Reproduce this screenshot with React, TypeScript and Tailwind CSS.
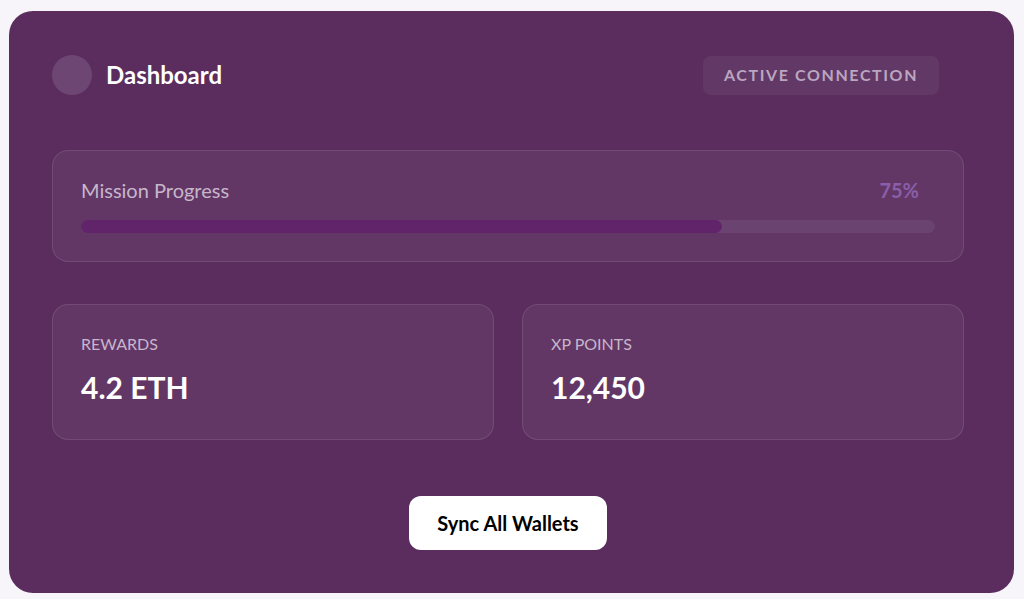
export default function App() {
  return (
    <div className="min-h-screen bg-[#f7f5fa] pt-[11px] pr-[10px] pb-[6px] pl-[9px]" style={{ fontFamily: 'Lato, "Open Sans", sans-serif' }}>
      <div className="rounded-[24px] bg-[#5a2d5e] pt-[44px] pr-[50px] pb-[43px] pl-[43px]">
        {/* Header */}
        <div className="flex h-10 items-center justify-between">
          <div className="flex items-center gap-[14px]">
            <div className="h-10 w-10 rounded-full bg-[#6e4673]" />
            <h1 className="text-[24px] font-bold text-white">Dashboard</h1>
          </div>
          <div className="mr-[25px] flex h-[39px] w-[236px] items-center justify-center rounded-lg bg-white/5 text-[16px] font-bold tracking-[0.1em] text-[#bba6c0]">
            ACTIVE CONNECTION
          </div>
        </div>

        {/* Progress */}
        <div className="mt-[55px] h-[112px] rounded-2xl border border-white/10 bg-white/5 px-[28px] pt-[24px]">
          <div className="flex items-center justify-between pr-[16px]">
            <span className="text-[20px] text-[#c7b6cb]">Mission Progress</span>
            <span className="text-[20px] font-bold text-[#8a5ea8]">75%</span>
          </div>
          <div className="mt-[15px] h-[13px] rounded-full bg-[#6b4370]">
            <div className="h-full rounded-full bg-[#61246b]" style={{ width: '75%' }} />
          </div>
        </div>

        {/* Stats */}
        <div className="mt-[42px] grid grid-cols-2 gap-[28px]">
          {[
            { label: 'REWARDS', value: '4.2 ETH' },
            { label: 'XP POINTS', value: '12,450' },
          ].map((s) => (
            <div key={s.label} className="h-[136px] rounded-2xl border border-white/10 bg-white/5 px-[28px] pt-[27px]">
              <div className="text-[16px] text-[#c7b6cb]">{s.label}</div>
              <div className="mt-[16px] text-[30px] font-bold leading-none text-white">{s.value}</div>
            </div>
          ))}
        </div>

        {/* Action */}
        <div className="mt-[56px] flex justify-center">
          <button className="h-[54px] w-[198px] rounded-xl bg-white text-[20px] font-bold text-black">
            Sync All Wallets
          </button>
        </div>
      </div>
    </div>
  )
}
